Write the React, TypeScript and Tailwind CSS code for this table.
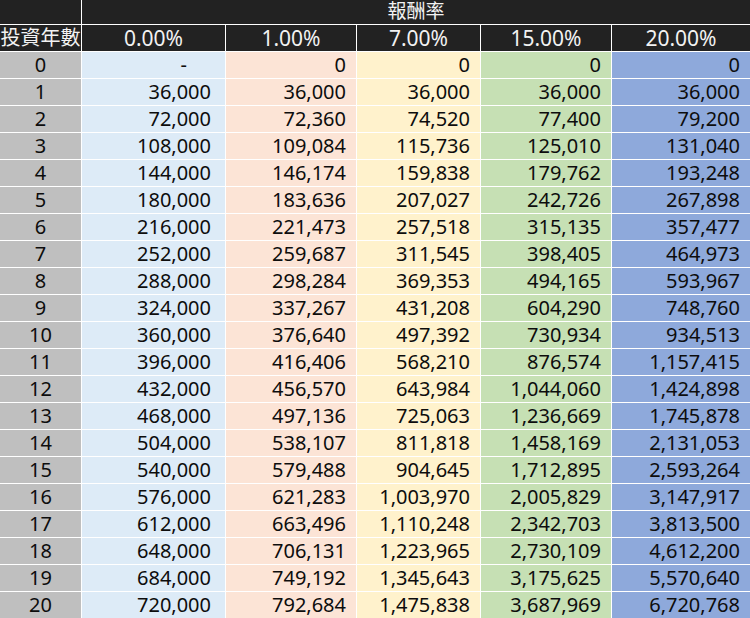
import { Fragment } from 'react';

const rates = ['0.00%', '1.00%', '7.00%', '15.00%', '20.00%'];

const colBg = ['bg-[#ddebf7]', 'bg-[#fce4d6]', 'bg-[#fff2cc]', 'bg-[#c6e0b4]', 'bg-[#8ea9db]'];

// 每年投入 36,000 的累積金額
const rows: string[][] = [
  ['-', '0', '0', '0', '0'],
  ['36,000', '36,000', '36,000', '36,000', '36,000'],
  ['72,000', '72,360', '74,520', '77,400', '79,200'],
  ['108,000', '109,084', '115,736', '125,010', '131,040'],
  ['144,000', '146,174', '159,838', '179,762', '193,248'],
  ['180,000', '183,636', '207,027', '242,726', '267,898'],
  ['216,000', '221,473', '257,518', '315,135', '357,477'],
  ['252,000', '259,687', '311,545', '398,405', '464,973'],
  ['288,000', '298,284', '369,353', '494,165', '593,967'],
  ['324,000', '337,267', '431,208', '604,290', '748,760'],
  ['360,000', '376,640', '497,392', '730,934', '934,513'],
  ['396,000', '416,406', '568,210', '876,574', '1,157,415'],
  ['432,000', '456,570', '643,984', '1,044,060', '1,424,898'],
  ['468,000', '497,136', '725,063', '1,236,669', '1,745,878'],
  ['504,000', '538,107', '811,818', '1,458,169', '2,131,053'],
  ['540,000', '579,488', '904,645', '1,712,895', '2,593,264'],
  ['576,000', '621,283', '1,003,970', '2,005,829', '3,147,917'],
  ['612,000', '663,496', '1,110,248', '2,342,703', '3,813,500'],
  ['648,000', '706,131', '1,223,965', '2,730,109', '4,612,200'],
  ['684,000', '749,192', '1,345,643', '3,175,625', '5,570,640'],
  ['720,000', '792,684', '1,475,838', '3,687,969', '6,720,768'],
];

export default function App() {
  return (
    <div
      className="w-[750px] h-[618px] overflow-hidden bg-white text-[20px] leading-none text-[#0d0d0d]"
      style={{ fontFamily: '"Noto Sans", "Noto Sans CJK TC", sans-serif' }}
    >
      <div className="grid grid-cols-[81px_143px_130px_123px_130px_138px] grid-rows-[24px_26px_repeat(21,26px)] gap-px">
        {/* Header */}
        <div className="bg-[#222222]" />
        <div className="col-span-5 bg-[#222222] text-[#f2f2f2] text-[19px] flex items-start justify-center pt-[1px]">
          <span className="leading-[20px]">報酬率</span>
        </div>

        <div className="bg-[#222222] text-[#f2f2f2] flex items-center justify-center">
          投資年數
        </div>
        {rates.map((r) => (
          <div key={r} className="bg-[#222222] text-[#f2f2f2] text-[21px] flex items-center justify-center">
            {r}
          </div>
        ))}

        {/* Body */}
        {rows.map((row, year) => (
          <Fragment key={year}>
            <div className="bg-[#bfbfbf] flex items-center justify-center">{year}</div>
            {row.map((v, i) => (
              <div
                key={i}
                className={`${colBg[i]} flex items-center justify-end ${
                  v === '-' ? 'pr-[38px]' : i === 0 ? 'pr-[14px]' : 'pr-[10px]'
                }`}
              >
                {v}
              </div>
            ))}
          </Fragment>
        ))}
      </div>
    </div>
  );
}
